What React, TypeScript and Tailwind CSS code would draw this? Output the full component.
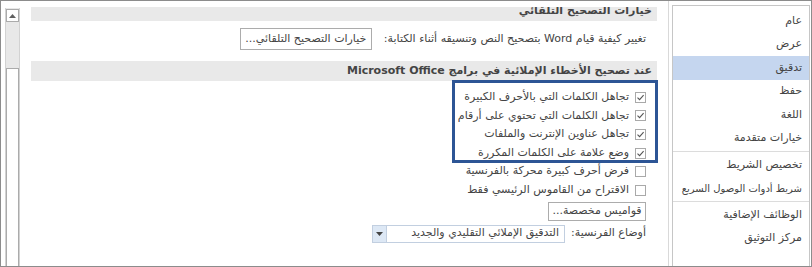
import React from 'react';

const navGroups = [
    ['عام', 'عرض', 'تدقيق', 'حفظ', 'اللغة', 'خيارات متقدمة'],
    ['تخصيص الشريط', 'شريط أدوات الوصول السريع'],
    ['الوظائف الإضافية', 'مركز التوثيق'],
];

const checks = [
    { label: 'تجاهل الكلمات التي بالأحرف الكبيرة', checked: true },
    { label: 'تجاهل الكلمات التي تحتوي على أرقام', checked: true },
    { label: 'تجاهل عناوين الإنترنت والملفات', checked: true },
    { label: 'وضع علامة على الكلمات المكررة', checked: true },
    { label: 'فرض أحرف كبيرة محركة بالفرنسية', checked: false },
    { label: 'الاقتراح من القاموس الرئيسي فقط', checked: false },
];

const CheckBox = ({ checked }: { checked: boolean }) => (
    <span className="w-[11px] h-[11px] border border-[#a9a9a9] bg-white flex items-center justify-center shrink-0">
        {checked && (
            <svg width="9" height="9" viewBox="0 0 9 9">
                <path d="M1.5 4.6 L3.6 6.7 L7.6 2.2" fill="none" stroke="#555" strokeWidth="1.1" />
            </svg>
        )}
    </span>
);

const App = () => {
    return (
        <div className="w-[812px] h-[267px] border border-[#8c8c8c] bg-white flex overflow-hidden relative font-['DejaVu_Sans',sans-serif] text-[11px] text-[#444]">
            {/* scrollbar (left, since page is rtl) */}
            <div className="ml-[4px] mt-[7px] w-[15px] flex flex-col border-x border-[#d2d2d2] bg-[#e8e8e8]">
                <div className="mt-px h-[13px] bg-white border border-[#ababab] flex items-center justify-center">
                    <svg width="7" height="4" viewBox="0 0 7 4">
                        <path d="M0 4 L3.5 0 L7 4 Z" fill="#606060" />
                    </svg>
                </div>
                <div className="h-[46px]" />
                <div className="flex-1 bg-white border border-[#ababab] border-b-0" />
            </div>

            {/* main options */}
            <div dir="rtl" className="w-[648px] mt-[6px] px-[11px] overflow-hidden flex flex-col whitespace-nowrap">
                {/* scrolled: top of this header is hidden */}
                <div className="-mt-[5px] h-[19px] shrink-0 bg-[#e9e9e9] flex items-center pr-[5px] font-bold">
                    خيارات التصحيح التلقائي
                </div>

                <div className="mt-[7px] h-[22px] shrink-0 flex items-center pr-[11px] gap-[12px]">
                    <span>تغيير كيفية قيام Word بتصحيح النص وتنسيقه أثناء الكتابة:</span>
                    <button className="h-[22px] w-[132px] border border-[#acacac] bg-white text-[#444]">
                        خيارات التصحيح التلقائي...
                    </button>
                </div>

                <div className="mt-[11px] h-[20px] shrink-0 bg-[#e9e9e9] flex items-center pr-[5px] font-bold">
                    عند تصحيح الأخطاء الإملائية في برامج Microsoft Office
                </div>

                <div className="mt-[7px] flex flex-col pr-[11px]">
                    {checks.map(c => (
                        <div key={c.label} className="h-[18.6px] flex items-center gap-[6px]">
                            <CheckBox checked={c.checked} />
                            <span>{c.label}</span>
                        </div>
                    ))}
                </div>

                <div className="mt-[2px] pr-[11px] flex">
                    <button className="h-[19px] w-[98px] border border-[#acacac] bg-white text-[#444]">
                        قواميس مخصصة...
                    </button>
                </div>

                <div className="mt-[4px] h-[18px] pr-[11px] flex items-center gap-[6px]">
                    <span>أوضاع الفرنسية:</span>
                    <div className="h-[18px] w-[193px] border border-[#c2cfe0] flex">
                        <div className="flex-1 flex items-center pr-[5px]">التدقيق الإملائي التقليدي والجديد</div>
                        <div className="w-[14px] bg-[#dde8f5] border-r border-[#c2cfe0] flex items-center justify-center">
                            <svg width="7" height="4" viewBox="0 0 7 4">
                                <path d="M0 0 L7 0 L3.5 4 Z" fill="#444" />
                            </svg>
                        </div>
                    </div>
                </div>
            </div>

            {/* navigation list */}
            <div className="border-l border-[#d9d9d9] pl-[3px] flex">
                <div dir="rtl" className="mt-[4px] w-[138px] border border-b-0 border-[#c6c6c6] pt-[3px] flex flex-col whitespace-nowrap overflow-hidden">
                    {navGroups.map((group, gi) => (
                        <div key={gi} className={gi > 0 ? 'border-t border-[#dcdcdc] mt-px pt-px' : ''}>
                            {group.map(item => (
                                <div
                                    key={item}
                                    className={
                                        item === 'تدقيق'
                                            ? 'h-[23.5px] flex items-center pr-[7px] bg-[#c5d6ef]'
                                            : item.length > 20
                                              ? 'h-[23.5px] flex items-center pr-[7px] text-[10px]'
                                              : 'h-[23.5px] flex items-center pr-[7px]'
                                    }
                                >
                                    {item}
                                </div>
                            ))}
                        </div>
                    ))}
                </div>
            </div>

            {/* highlight box drawn over the checkbox list */}
            <div className="absolute left-[451px] top-[79px] w-[206px] h-[83px] border-[3px] border-[#2d5595] pointer-events-none" />
        </div>
    );
};

export default App;
